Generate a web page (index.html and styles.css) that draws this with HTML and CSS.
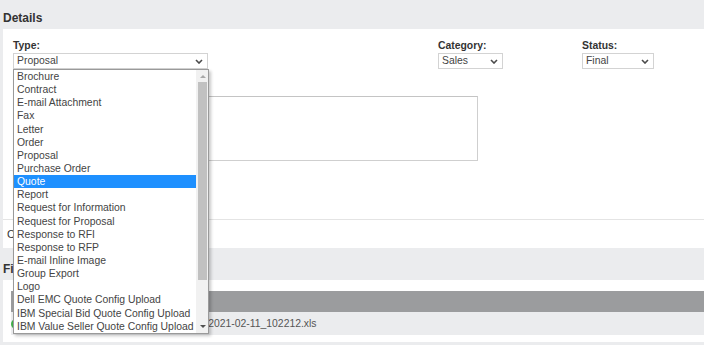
FILE: index.html
```html
<!DOCTYPE html>
<html lang="en">
<head>
    <meta charset="UTF-8">
    <meta name="viewport" content="width=device-width, initial-scale=1.0">
    <title>Document Details</title>
    <link rel="stylesheet" href="styles.css">
</head>
<body>

    <div class="page">
        <h2 class="section-title first">Details</h2>

        <div class="panel details">
            <div class="fields">
                <div class="field type-field">
                    <label>Type:</label>
                    <div class="select wide">
                        <span>Proposal</span>
                        <svg class="chevron" viewBox="0 0 8 5"><path d="M1 1l3 3 3-3"/></svg>
                    </div>

                    <!-- open list of the Type select -->
                    <div class="dropdown">
                        <ul class="options">
                            <li>Brochure</li>
                            <li>Contract</li>
                            <li>E-mail Attachment</li>
                            <li>Fax</li>
                            <li>Letter</li>
                            <li>Order</li>
                            <li>Proposal</li>
                            <li>Purchase Order</li>
                            <li class="selected">Quote</li>
                            <li>Report</li>
                            <li>Request for Information</li>
                            <li>Request for Proposal</li>
                            <li>Response to RFI</li>
                            <li>Response to RFP</li>
                            <li>E-mail Inline Image</li>
                            <li>Group Export</li>
                            <li>Logo</li>
                            <li>Dell EMC Quote Config Upload</li>
                            <li>IBM Special Bid Quote Config Upload</li>
                            <li>IBM Value Seller Quote Config Upload</li>
                        </ul>
                        <div class="scrollbar">
                            <div class="arrow up"></div>
                            <div class="track"><div class="thumb"></div></div>
                            <div class="arrow down"></div>
                        </div>
                    </div>
                </div>

                <div class="field">
                    <label>Category:</label>
                    <div class="select category">
                        <span>Sales</span>
                        <svg class="chevron" viewBox="0 0 8 5"><path d="M1 1l3 3 3-3"/></svg>
                    </div>
                </div>

                <div class="field">
                    <label>Status:</label>
                    <div class="select status">
                        <span>Final</span>
                        <svg class="chevron" viewBox="0 0 8 5"><path d="M1 1l3 3 3-3"/></svg>
                    </div>
                </div>
            </div>

            <div class="field notes">
                <label>Description:</label>
                <div class="textarea"></div>
            </div>
        </div>

        <div class="panel comments">Comments</div>

        <h2 class="section-title">Files</h2>

        <div class="panel files">
            <div class="file-table">
                <div class="file-head">File Name</div>
                <div class="file-row">
                    <span class="file-icon"></span>
                    <span class="file-name">Dell_EMC_Quote_Config_Upload_2021-02-11_102212.xls</span>
                </div>
            </div>
        </div>
    </div>

</body>
</html>
```

FILE: styles.css
```css
/* General Reset */
html, body {
    overflow: hidden;
}

body {
    font-family: "Liberation Sans", Arial, sans-serif;
    font-size: 10.4px;
    margin: 0;
    padding: 0;
    background-color: #ebecee;
    color: #333;
}

.page {
    padding-left: 3px;
}

/* Section headings */
.section-title {
    margin: 0;
    padding-top: 10px;
    font-size: 12px;
    line-height: 22px;
    font-weight: bold;
    color: #333;
}

.section-title.first {
    padding-top: 7px;
}

.panel {
    background-color: #fff;
}

/* Details panel */
.details {
    padding: 10px 0 58px 10px;
}

.fields {
    display: grid;
    grid-template-columns: 425px 144px 1fr;
}

.field label {
    display: block;
    font-weight: bold;
    line-height: 13px;
    margin-bottom: 1px;
    color: #333;
}

.type-field {
    position: relative;
}

.select {
    display: flex;
    align-items: center;
    justify-content: space-between;
    height: 14px;
    line-height: 14px;
    padding: 0 4px 0 3px;
    border: 1px solid #d3d3d3;
    background-color: #fff;
    color: #444;
}

.select.wide {
    width: 186px;
}

.select.category {
    width: 56px;
}

.select.status {
    width: 63px;
}

.chevron {
    width: 8px;
    height: 5px;
    fill: none;
    stroke: #4a4a4a;
    stroke-width: 1.6;
}

.notes {
    margin-top: 13px;
}

.textarea {
    width: 463px;
    height: 63px;
    border: 1px solid #cfcfcf;
    border-top-color: #c4c4c4;
}

/* Open select list */
.dropdown {
    position: absolute;
    top: 100%;
    left: 0;
    width: 194px;
    display: flex;
    border: 1px solid #9a9a9a;
    background-color: #fff;
    box-shadow: 2px 2px 3px rgba(0, 0, 0, 0.22);
    z-index: 5;
}

.options {
    flex: 1;
    list-style: none;
    margin: 0;
    padding: 0;
}

.options li {
    height: 13.15px;
    line-height: 13.15px;
    padding-left: 3px;
    white-space: nowrap;
    overflow: hidden;
    color: #444;
}

.options li.selected {
    background-color: #1e90ff;
    color: #fff;
}

.scrollbar {
    width: 12px;
    display: flex;
    flex-direction: column;
    background-color: #f1f1f1;
}

.arrow {
    height: 12px;
    display: flex;
    align-items: center;
    justify-content: center;
}

.arrow::before {
    content: "";
    margin-left: 1px;
    border-left: 3px solid transparent;
    border-right: 3px solid transparent;
}

.arrow.up::before {
    border-bottom: 3px solid #a8a8a8;
}

.arrow.down::before {
    border-top: 3px solid #505050;
}

.track {
    flex: 1;
    padding: 0 1px 0 2px;
}

.thumb {
    height: 198px;
    background-color: #c1c1c1;
}

/* Comments row */
.comments {
    border-top: 1px solid #e4e4e4;
    padding-left: 4px;
    line-height: 28px;
    font-size: 11px;
}

/* Files */
.files {
    padding: 11px 0 7px 8px;
}

.file-head {
    height: 21px;
    line-height: 21px;
    padding-left: 36px;
    background-color: #9b9c9e;
    color: #fff;
    font-weight: bold;
}

.file-row {
    display: flex;
    align-items: center;
    height: 23px;
    background-color: #ebecee;
    color: #555;
}

.file-icon {
    width: 10px;
    height: 10px;
    border-radius: 50%;
    background-color: #3fae49;
}

.file-name {
    margin-left: 26px;
}
```
